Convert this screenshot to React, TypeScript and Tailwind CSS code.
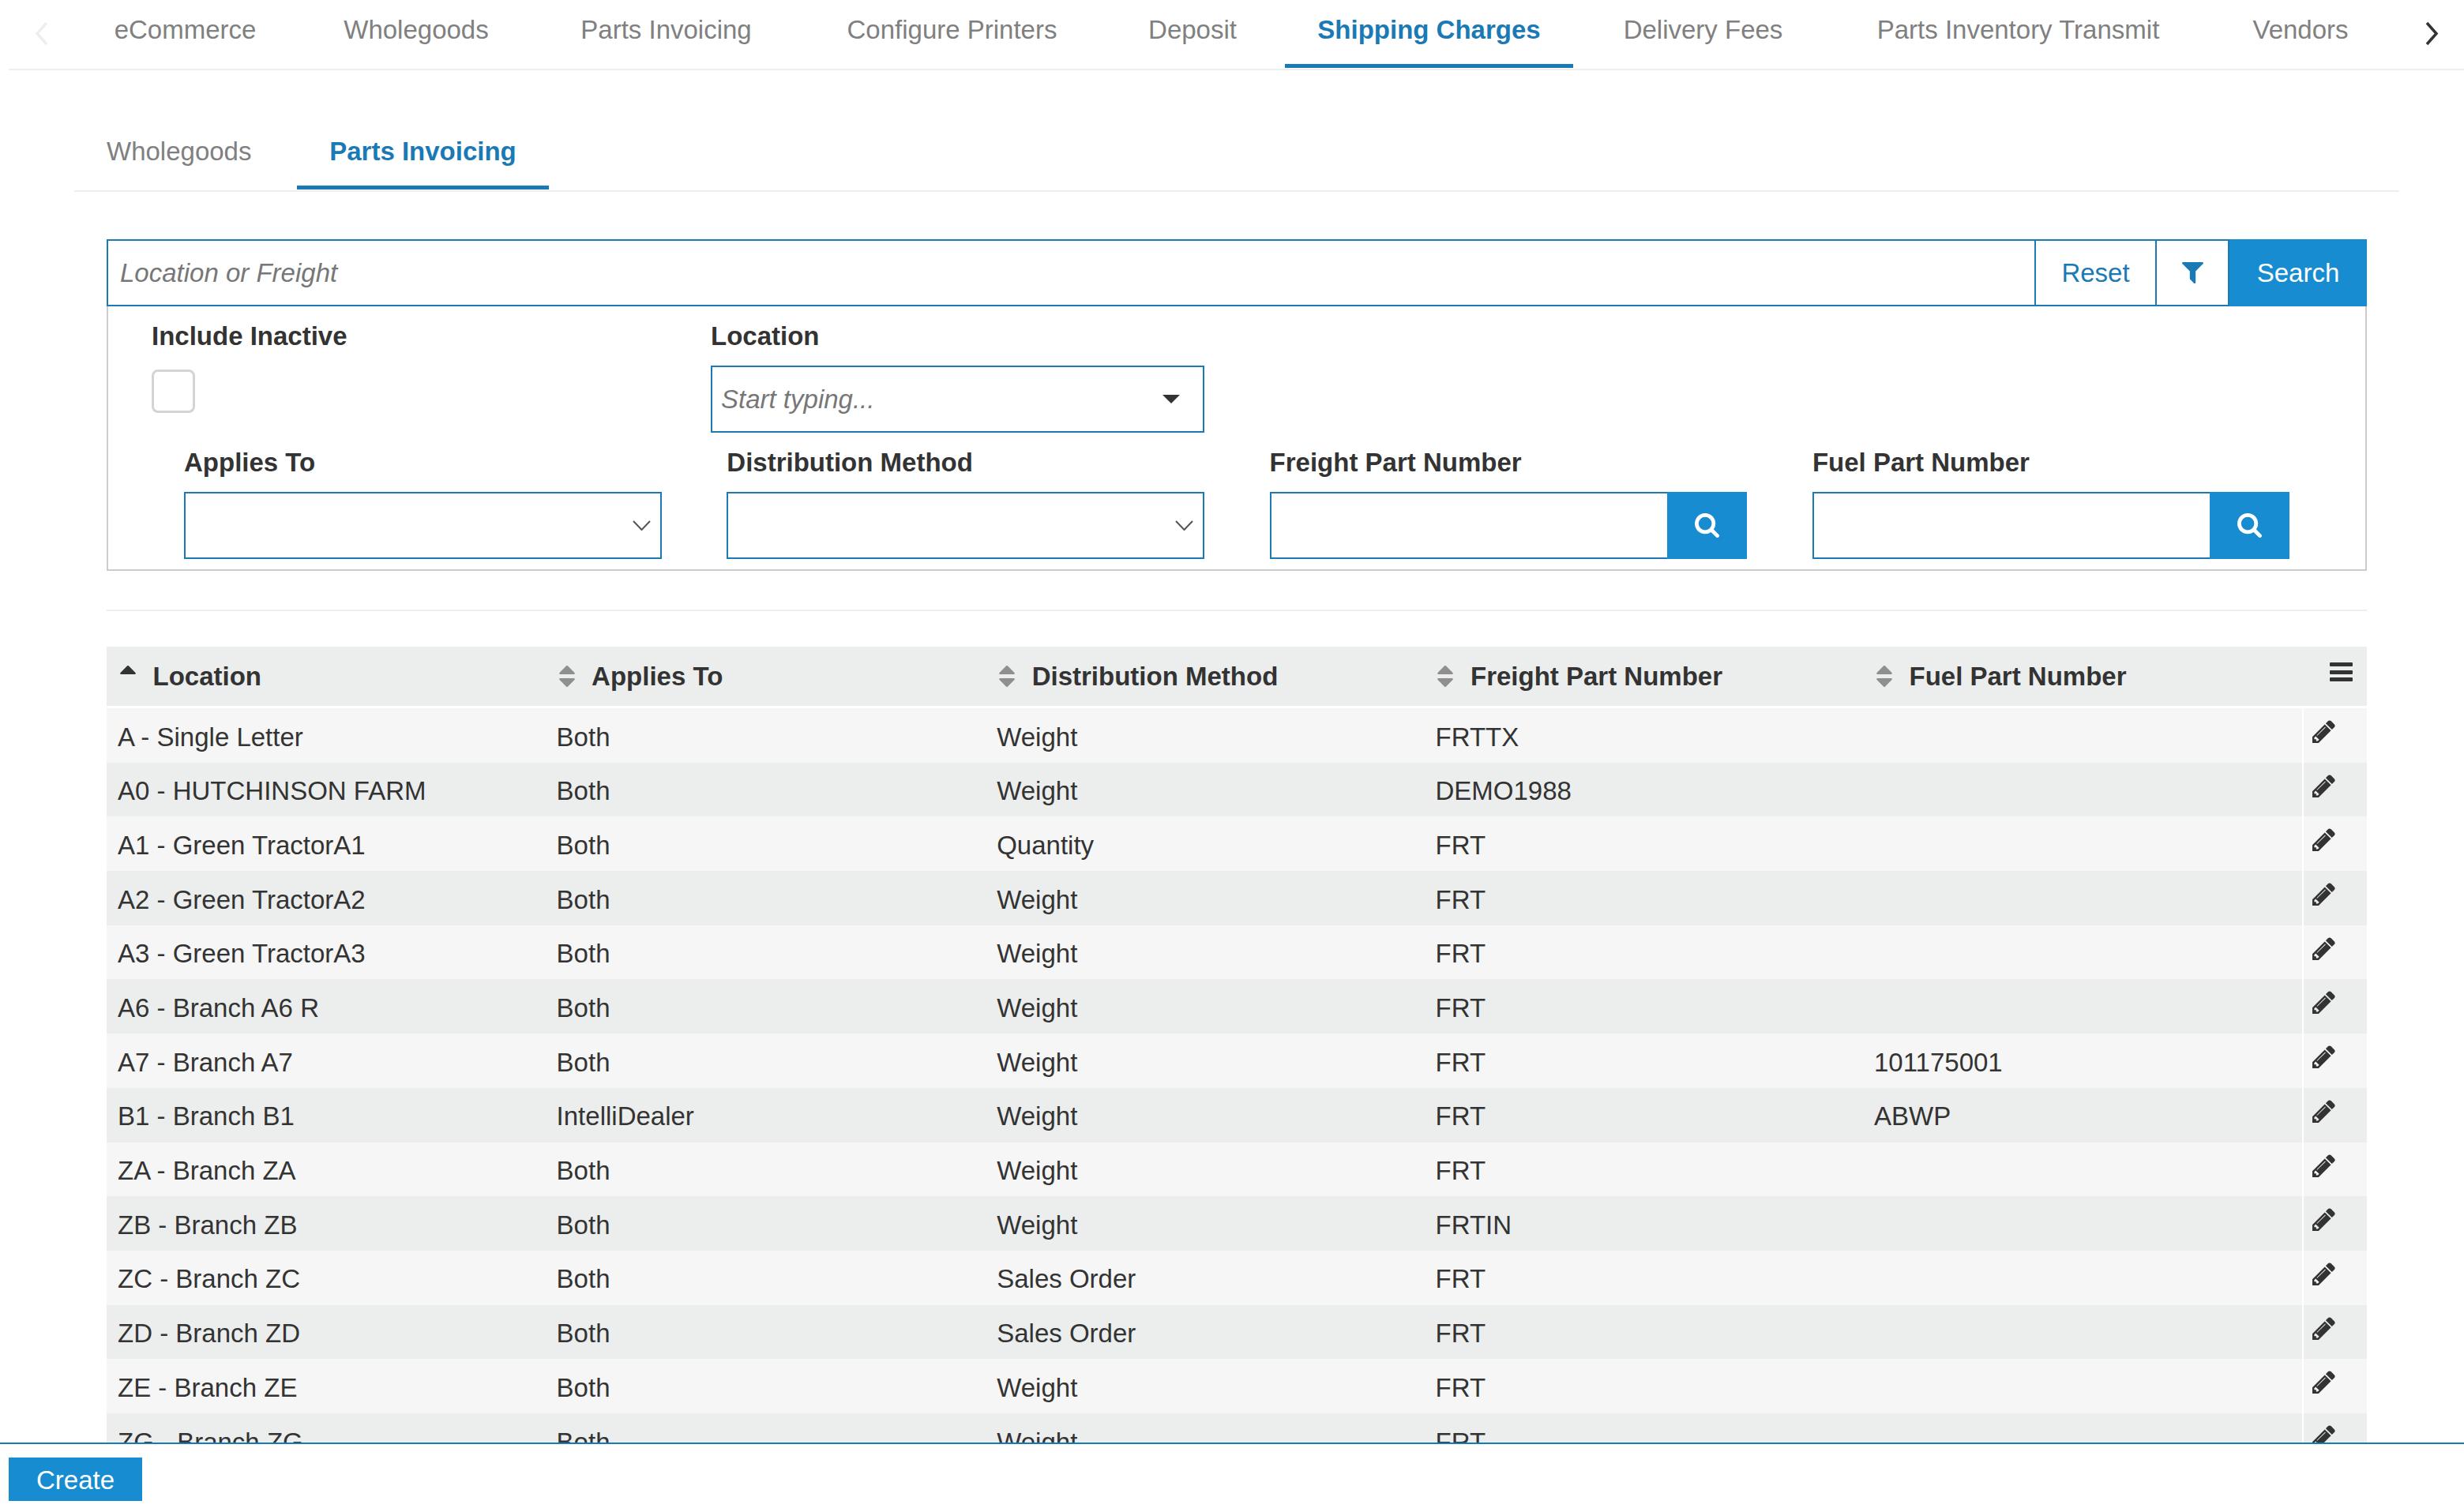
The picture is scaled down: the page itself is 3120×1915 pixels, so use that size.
const navTabs = [
  { label: 'eCommerce', cls: 'w-[265px]' },
  { label: 'Wholegoods', cls: 'w-[268px] ml-[26px]' },
  { label: 'Parts Invoicing', cls: 'w-[301px] ml-[32px]' },
  { label: 'Configure Printers', cls: 'w-[351px] ml-[36px]' },
  { label: 'Deposit', cls: 'w-[196px] ml-[31px]' },
  { label: 'Shipping Charges', cls: 'w-[365px] ml-[19px]', active: true },
  { label: 'Delivery Fees', cls: 'w-[287px] ml-[21px]' },
  { label: 'Parts Inventory Transmit', cls: 'w-[443px] ml-[34px]' },
  { label: 'Vendors', cls: 'w-[206px] ml-[33px]' },
]

const columns = ['Location', 'Applies To', 'Distribution Method', 'Freight Part Number', 'Fuel Part Number']

const rows = [
  ['A - Single Letter', 'Both', 'Weight', 'FRTTX', ''],
  ['A0 - HUTCHINSON FARM', 'Both', 'Weight', 'DEMO1988', ''],
  ['A1 - Green TractorA1', 'Both', 'Quantity', 'FRT', ''],
  ['A2 - Green TractorA2', 'Both', 'Weight', 'FRT', ''],
  ['A3 - Green TractorA3', 'Both', 'Weight', 'FRT', ''],
  ['A6 - Branch A6 R', 'Both', 'Weight', 'FRT', ''],
  ['A7 - Branch A7', 'Both', 'Weight', 'FRT', '101175001'],
  ['B1 - Branch B1', 'IntelliDealer', 'Weight', 'FRT', 'ABWP'],
  ['ZA - Branch ZA', 'Both', 'Weight', 'FRT', ''],
  ['ZB - Branch ZB', 'Both', 'Weight', 'FRTIN', ''],
  ['ZC - Branch ZC', 'Both', 'Sales Order', 'FRT', ''],
  ['ZD - Branch ZD', 'Both', 'Sales Order', 'FRT', ''],
  ['ZE - Branch ZE', 'Both', 'Weight', 'FRT', ''],
  ['ZG - Branch ZG', 'Both', 'Weight', 'FRT', ''],
]

function SearchIcon() {
  return (
    <svg viewBox="64 128 1664 1664" className="w-[31px] h-[31px]" fill="#ffffff">
      <path d="M1216 832q0-185-131.5-316.5t-316.5-131.5-316.5 131.5-131.5 316.5 131.5 316.5 316.5 131.5 316.5-131.5 131.5-316.5zm512 832q0 52-38 90t-90 38q-54 0-90-38l-343-342q-179 124-399 124-143 0-273.5-55.5t-225-150-150-225-55.5-273.5 55.5-273.5 150-225 225-150 273.5-55.5 273.5 55.5 225 150 150 225 55.5 273.5q0 220-124 399l343 343q37 37 37 90z" />
    </svg>
  )
}

function PencilIcon() {
  return (
    <svg viewBox="128 128 1536 1536" className="w-[29px] h-[29px]" fill="#333333">
      <path d="M491 1536l91-91-235-235-91 91v107h128v128h107zm523-928q0-22-22-22-10 0-17 7l-542 542q-7 7-7 17 0 22 22 22 10 0 17-7l542-542q7-7 7-17zm-54-192l416 416-832 832h-416v-416zm683 96q0 53-37 90l-166 166-416-416 166-165q36-38 90-38 53 0 91 38l235 234q37 39 37 91z" />
    </svg>
  )
}

function SortIcon({ asc }: { asc?: boolean }) {
  return (
    <svg viewBox="384 192 1024 1408" className="w-[20px] h-[27px] shrink-0" fill={asc ? '#333333' : '#8f8f8f'}>
      {asc ? (
        <path d="M1408 704q0 26-19 45t-45 19h-896q-26 0-45-19t-19-45 19-45l448-448q19-19 45-19t45 19l448 448q19 19 19 45z" />
      ) : (
        <path d="M1408 1088q0 26-19 45l-448 448q-19 19-45 19t-45-19l-448-448q-19-19-19-45t19-45 45-19h896q26 0 45 19t19 45zm0-384q0 26-19 45t-45 19h-896q-26 0-45-19t-19-45 19-45l448-448q19-19 45-19t45 19l448 448q19 19 19 45z" />
      )}
    </svg>
  )
}

function Chevron({ right, color }: { right?: boolean; color: string }) {
  return (
    <svg viewBox="0 0 19 31" className="w-[19px] h-[31px] shrink-0" fill="none" stroke={color} strokeWidth="3.5">
      <polyline points={right ? '3,2 15,15.5 3,29' : '16,2 4,15.5 16,29'} />
    </svg>
  )
}

function Label({ children }: { children: React.ReactNode }) {
  return <div className="h-[75px] flex items-center font-bold text-[#333333] whitespace-nowrap">{children}</div>
}

function SelectField({ label }: { label: string }) {
  return (
    <div className="w-[604.5px]">
      <Label>{label}</Label>
      <div className="h-[85px] border-2 border-[#1a7ab5] flex items-center justify-end pr-[12px]">
        <svg viewBox="0 0 23 13" className="w-[23px] h-[13px]" fill="none" stroke="#555555" strokeWidth="2">
          <polyline points="1,1 11.5,12 22,1" />
        </svg>
      </div>
    </div>
  )
}

function LookupField({ label }: { label: string }) {
  return (
    <div className="w-[604.5px]">
      <Label>{label}</Label>
      <div className="h-[85px] flex">
        <input className="flex-1 min-w-0 border-2 border-r-0 border-[#1a7ab5] outline-none" />
        <button className="w-[101px] bg-[#178cd1] flex items-center justify-center">
          <SearchIcon />
        </button>
      </div>
    </div>
  )
}

export default function App() {
  return (
    <div className="w-full h-[1915px] flex flex-col bg-white overflow-hidden text-[33px] font-['Liberation_Sans',Arial,sans-serif] text-[#333333]">
      <div className="flex-1 min-h-0 overflow-hidden">
        {/* Top tabs */}
        <div className="ml-[11px] h-[89px] border-b-2 border-[#eeeeee] flex items-start">
          <div className="ml-[32px] mr-[40px] mt-[27px]">
            <Chevron color="#eeeeee" />
          </div>
          {navTabs.map((tab) => (
            <div
              key={tab.label}
              className={`${tab.cls} h-[86px] pb-[5px] border-b-[5px] flex items-center justify-center whitespace-nowrap ${
                tab.active ? 'border-[#1a7ab5] text-[#1a7ab5] font-bold' : 'border-transparent text-[#808080]'
              }`}
            >
              {tab.label}
            </div>
          ))}
          <div className="ml-[54px] mt-[27px]">
            <Chevron right color="#333333" />
          </div>
        </div>

        {/* Sub tabs */}
        <div className="mt-[61px] ml-[94px] w-[2944px] pb-[1px] border-b-2 border-[#eeeeee] flex">
          <div className="w-[267px] mr-[15px] h-[90px] pb-[1px] pl-[41px] border-b-[5px] border-transparent flex items-center text-[#808080]">
            Wholegoods
          </div>
          <div className="w-[319px] h-[90px] pb-[1px] border-b-[5px] border-[#1a7ab5] flex items-center justify-center font-bold text-[#1a7ab5]">
            Parts Invoicing
          </div>
        </div>

        <div className="ml-[135px] w-[2862px]">
          {/* Search bar */}
          <div className="mt-[60px] h-[85px] flex">
            <input
              placeholder="Location or Freight"
              className="flex-1 min-w-0 border-2 border-[#1a7ab5] pl-[15px] outline-none placeholder:italic placeholder:text-[#777777]"
            />
            <button className="w-[153px] border-y-2 border-r-2 border-[#1a7ab5] text-[#1a7ab5]">Reset</button>
            <button className="w-[92px] border-y-2 border-r-2 border-[#1a7ab5] flex items-center justify-center">
              <svg viewBox="192 256 1408 1408" className="w-[27px] h-[27px]" fill="#1a7ab5">
                <path d="M1595 295q17 41-14 70l-493 493v742q0 42-39 59-13 5-25 5-27 0-45-19l-256-256q-19-19-19-45v-486l-493-493q-31-29-14-70 17-39 59-39h1280q42 0 59 39z" />
              </svg>
            </button>
            <button className="w-[174px] bg-[#178cd1] text-white">Search</button>
          </div>

          {/* Filters */}
          <div className="h-[335px] border-x-2 border-b-2 border-[#cccccc]">
            <div className="flex pl-[55px] h-[160px]">
              <div className="w-[708px]">
                <Label>Include Inactive</Label>
                <div className="mt-[5px] w-[55px] h-[55px] rounded-[8px] border-[3px] border-[#d4d4d4]" />
              </div>
              <div className="w-[625px]">
                <Label>Location</Label>
                <div className="h-[85px] border-2 border-[#1a7ab5] flex items-center justify-between pl-[11px] pr-[29px]">
                  <span className="italic text-[#777777]">Start typing...</span>
                  <svg viewBox="0 0 22 11" className="w-[22px] h-[11px]" fill="#333333">
                    <polygon points="0,0 22,0 11,11" />
                  </svg>
                </div>
              </div>
            </div>
            <div className="flex pl-[96px] gap-[82.8px]">
              <SelectField label="Applies To" />
              <SelectField label="Distribution Method" />
              <LookupField label="Freight Part Number" />
              <LookupField label="Fuel Part Number" />
            </div>
          </div>

          <div className="mt-[49px] border-t-2 border-[#eeeeee]" />

          {/* Table */}
          <div className="mt-[45px] h-[75px] mb-[3px] bg-[#eceeee] grid grid-cols-[555.6px_557.6px_555.3px_555.5px_555.6px_1fr] font-bold">
            {columns.map((col, i) => (
              <div key={col} className="flex items-center pl-[17px] gap-[21.5px] whitespace-nowrap">
                <SortIcon asc={i === 0} />
                <span>{col}</span>
              </div>
            ))}
            <div className="pl-[35px] pt-[20px] flex flex-col gap-[4.5px]">
              <div className="w-[29px] h-[5px] rounded-[1px] bg-[#333333]" />
              <div className="w-[29px] h-[5px] rounded-[1px] bg-[#333333]" />
              <div className="w-[29px] h-[5px] rounded-[1px] bg-[#333333]" />
            </div>
          </div>
          {rows.map((row, i) => (
            <div
              key={row[0]}
              className={`h-[68.7px] grid grid-cols-[555.6px_557.6px_555.3px_555.5px_555.6px_1fr] ${i % 2 === 0 ? 'bg-[#f6f6f6]' : 'bg-[#eceeee]'}`}
            >
              {row.map((cell, j) => (
                <div key={j} className="flex items-center pl-[14px] pt-[4px] whitespace-nowrap">
                  {cell}
                </div>
              ))}
              <div className="border-l-2 border-white pl-[11px] pt-[15px]">
                <PencilIcon />
              </div>
            </div>
          ))}
        </div>
      </div>

      {/* Footer */}
      <div className="h-[88px] shrink-0 border-t-2 border-[#1a7ab5] pl-[11px] pt-[17px]">
        <button className="w-[169px] h-[55px] pt-[2px] bg-[#178cd1] text-white">Create</button>
      </div>
    </div>
  )
}
